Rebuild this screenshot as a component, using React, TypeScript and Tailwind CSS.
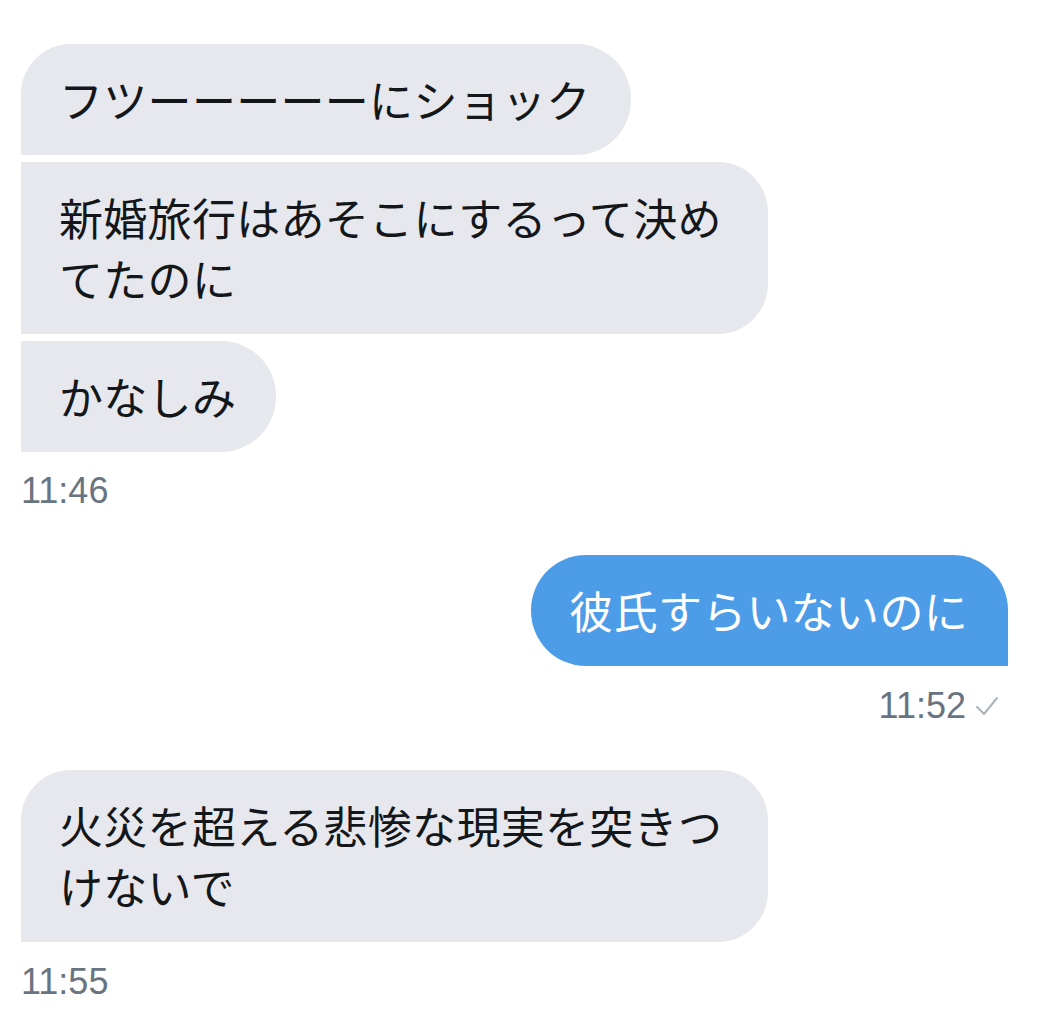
import React from 'react';

const jp = "font-['Hiragino_Sans','Noto_Sans_CJK_JP',sans-serif]";
const num = "font-['Liberation_Sans','Roboto',sans-serif]";

interface BubbleProps {
  text: string;
  corners: string;
  mine?: boolean;
}

const Bubble: React.FC<BubbleProps> = ({ text, corners, mine }) => (
  <div
    className={`max-w-[747px] pl-[38px] pr-[40px] py-[25px] text-[44px] leading-[61px] tracking-[0.3px] ${jp} ${corners} ${
      mine ? 'bg-[#4d9ce8] text-white self-end' : 'bg-[#e6e8ed] text-[#14171a] self-start'
    }`}
  >
    {text}
  </div>
);

const Stamp: React.FC<{ time: string; right?: boolean; check?: boolean }> = ({ time, right, check }) => (
  <div className={`flex items-center gap-2 text-[36px] leading-[40px] text-[#687482] ${num} ${right ? 'self-end pr-[8px]' : 'self-start pl-[21px]'}`}>
    <span>{time}</span>
    {check && (
      <svg width="26" height="22" viewBox="0 0 26 22" fill="none">
        <path d="M3 12 L10 19 L23 3" stroke="#aab2bd" strokeWidth="2" strokeLinecap="round" strokeLinejoin="round" />
      </svg>
    )}
  </div>
);

export default function App() {
  return (
    <div className="w-[1038px] h-[1025px] bg-white flex flex-col pl-[21px] pr-[30px] pt-[44px] overflow-hidden">
      <div className="flex flex-col gap-[7px]">
        <Bubble text="フツーーーーーにショック" corners="rounded-tl-[50px] rounded-r-[55px]" />
        <Bubble text="新婚旅行はあそこにするって決めてたのに" corners="rounded-r-[50px]" />
        <Bubble text="かなしみ" corners="rounded-r-[55px]" />
      </div>
      <div className="-ml-[21px] mt-[19px]">
        <Stamp time="11:46" />
      </div>

      <div className="flex flex-col mt-[44px]">
        <Bubble text="彼氏すらいないのに" corners="rounded-l-[55px] rounded-tr-[55px]" mine />
        <div className="self-end mt-[20px]">
          <Stamp time="11:52" right check />
        </div>
      </div>

      <div className="flex flex-col mt-[44px]">
        <Bubble text="火災を超える悲惨な現実を突きつけないで" corners="rounded-tl-[50px] rounded-r-[50px]" />
        <div className="-ml-[21px] mt-[20px]">
          <Stamp time="11:55" />
        </div>
      </div>
    </div>
  );
}
